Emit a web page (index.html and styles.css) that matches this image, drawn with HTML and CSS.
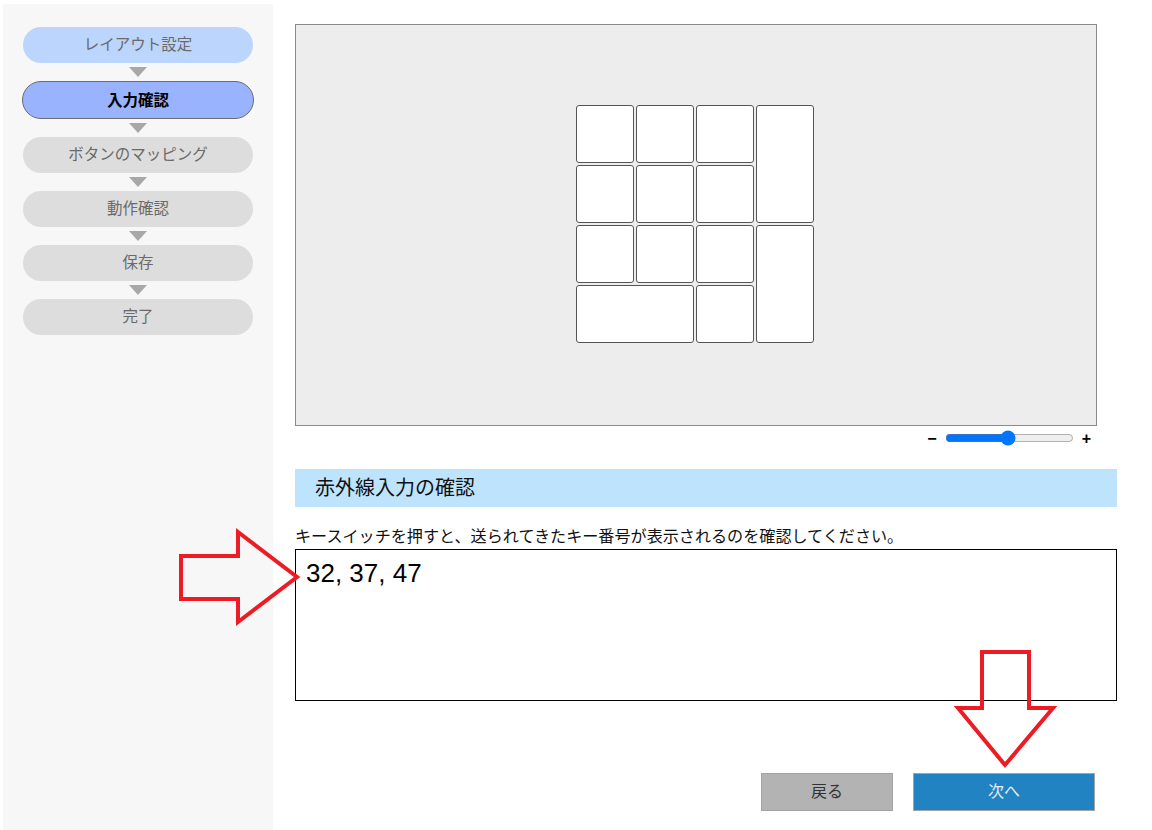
FILE: index.html
```html
<!DOCTYPE html>
<html lang="ja">
<head>
<meta charset="utf-8">
<title>入力確認</title>
<link rel="stylesheet" href="styles.css">
</head>
<body>
<div class="page">
  <nav class="sidebar">
    <div class="step done">レイアウト設定</div>
    <div class="arrow"></div>
    <div class="step current">入力確認</div>
    <div class="arrow"></div>
    <div class="step">ボタンのマッピング</div>
    <div class="arrow"></div>
    <div class="step">動作確認</div>
    <div class="arrow"></div>
    <div class="step">保存</div>
    <div class="arrow"></div>
    <div class="step">完了</div>
  </nav>
  <main class="main">
    <div class="canvas">
      <div class="keypad">
        <div class="key"></div>
        <div class="key"></div>
        <div class="key"></div>
        <div class="key tall"></div>
        <div class="key"></div>
        <div class="key"></div>
        <div class="key"></div>
        <div class="key"></div>
        <div class="key"></div>
        <div class="key"></div>
        <div class="key tall"></div>
        <div class="key wide"></div>
        <div class="key"></div>
      </div>
    </div>
    <div class="zoom-row">
      <span class="zoom-sign">−</span>
      <input class="zoom-range" type="range" min="0" max="100" value="49">
      <span class="zoom-sign">+</span>
    </div>
    <h2 class="section-title">赤外線入力の確認</h2>
    <p class="instruction">キースイッチを押すと、送られてきたキー番号が表示されるのを確認してください。</p>
    <div class="output">32, 37, 47</div>
    <div class="buttons">
      <button class="btn back">戻る</button>
      <button class="btn next">次へ</button>
    </div>
  </main>
</div>
<svg class="annotations" width="1152" height="830" viewBox="0 0 1152 830">
  <polygon points="181,556 238,556 238,532 297,577 238,622 238,599 181,599" fill="none" stroke="#ed1c24" stroke-width="4" stroke-linejoin="miter"/>
  <polygon points="982,652 1029,652 1029,708 1053,708 1005,765 958,708 982,708" fill="none" stroke="#ed1c24" stroke-width="4" stroke-linejoin="miter"/>
</svg>
</body>
</html>
```
FILE: styles.css
```css
* { box-sizing: border-box; }
html, body { margin: 0; padding: 0; background: #fff; }
body {
  font-family: "Liberation Sans", "Noto Sans CJK JP", sans-serif;
  color: #000;
  width: 1152px;
  height: 830px;
  overflow: hidden;
  position: relative;
}
.page {
  display: flex;
  align-items: flex-start;
  padding: 4px 0 0 3px;
}
.sidebar {
  width: 270px;
  height: 826px;
  background: #f7f7f7;
  padding: 23px 20px 0 20px;
  display: flex;
  flex-direction: column;
  align-items: center;
}
.step {
  width: 230px;
  height: 36px;
  border-radius: 18px;
  background: #dddddd;
  color: #6a6a6a;
  font-size: 15.5px;
  line-height: 33px;
  text-align: center;
  font-family: "Noto Sans CJK JP", sans-serif;
}
.step.done { background: #bcd5fd; }
.step.current {
  width: 232px;
  height: 38px;
  line-height: 35px;
  border-radius: 19px;
  background: #99b3ff;
  border: 1px solid #6b6b6b;
  color: #000;
  font-weight: bold;
}
.arrow {
  width: 0;
  height: 0;
  margin: 4px 0 4px;
  border-left: 9px solid transparent;
  border-right: 9px solid transparent;
  border-top: 10px solid #a8a8a8;
}
.main {
  width: 822px;
  margin-left: 22px;
  padding-top: 20px;
  display: flex;
  flex-direction: column;
}
.canvas {
  width: 802px;
  height: 402px;
  background: #ededed;
  border: 1px solid #8a8a8a;
  display: flex;
  align-items: center;
  justify-content: center;
}
.keypad {
  display: grid;
  grid-template-columns: repeat(4, 58px);
  grid-template-rows: repeat(4, 58px);
  gap: 2px;
  margin-left: -2px;
  margin-top: -2px;
}
.key {
  background: #fff;
  border: 1px solid #555;
  border-radius: 3px;
}
.key.tall { grid-row: span 2; }
.key.wide { grid-column: span 2; }
.zoom-row {
  width: 802px;
  height: 22px;
  display: flex;
  align-items: center;
  justify-content: flex-end;
  padding-right: 6px;
  gap: 8px;
}
.zoom-sign {
  font-family: "Liberation Sans", sans-serif;
  font-weight: bold;
  font-size: 16px;
  line-height: 16px;
  margin-top: 4px;
}
.zoom-range {
  width: 129px;
  margin: 2px 0 0 0;
  accent-color: #0075ff;
}
.section-title {
  margin: 21px 0 0 0;
  height: 38px;
  background: #bde3fd;
  font-family: "Noto Sans CJK JP", sans-serif;
  font-weight: normal;
  font-size: 20px;
  line-height: 36px;
  padding-left: 20px;
  color: #111;
}
.instruction {
  margin: 17px 0 0 0;
  padding-bottom: 3px;
  font-family: "Noto Sans CJK JP", sans-serif;
  font-size: 16.1px;
  line-height: 22px;
  color: #111;
  letter-spacing: 0;
  white-space: nowrap;
}
.output {
  height: 152px;
  border: 1px solid #000;
  padding: 8px 10px;
  font-family: "Liberation Sans", sans-serif;
  font-size: 26px;
  line-height: 30px;
}
.buttons {
  display: flex;
  justify-content: flex-end;
  gap: 20px;
  margin-top: 72px;
  padding-right: 22px;
}
.btn {
  height: 38px;
  border: 1px solid #a3a3a3;
  font-family: "Noto Sans CJK JP", sans-serif;
  font-size: 16px;
  padding: 0 0 4px 0;
  cursor: pointer;
}
.btn.back {
  width: 132px;
  background: #b3b3b3;
  color: #333;
}
.btn.next {
  width: 182px;
  background: #2183c1;
  color: #e6eef5;
}
.annotations {
  position: absolute;
  left: 0;
  top: 0;
  pointer-events: none;
}
```
